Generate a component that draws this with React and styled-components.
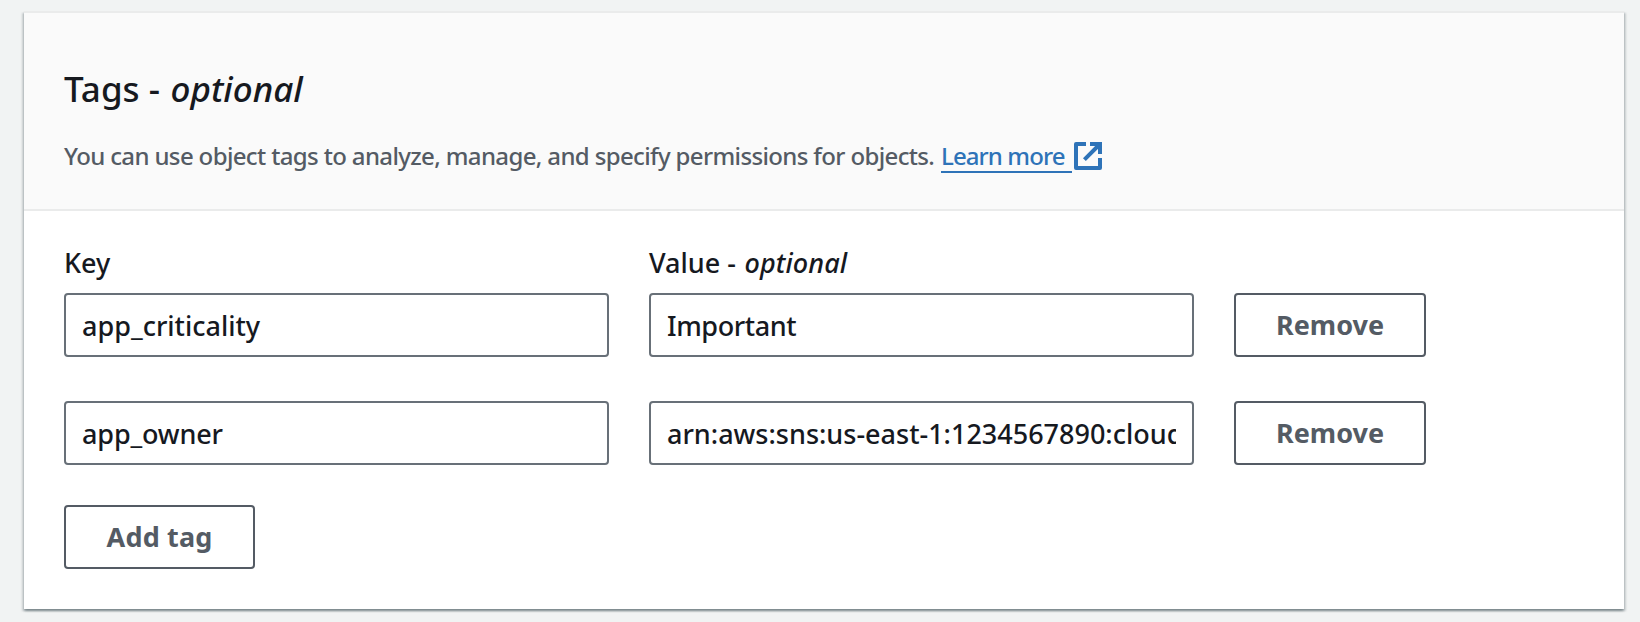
import React from 'react';
import styled, { createGlobalStyle } from 'styled-components';

const GlobalStyle = createGlobalStyle`
  * { box-sizing: border-box; }
  body {
    margin: 0;
    background: #f1f3f3;
    color: #16191f;
    font-family: "Noto Sans", "Open Sans", sans-serif;
    font-weight: 500;
  }
`;

const Page = styled.main`
  height: 622px;
  padding: 11px 16px 13px 24px;
  overflow: hidden;
`;

const Card = styled.section`
  width: 1600px;
  height: 598px;
  background: #fff;
  border-top: 2px solid #eaebeb;
  box-shadow:
    0 2px 2px rgba(0, 28, 36, 0.3),
    2px 2px 2px rgba(0, 28, 36, 0.15),
    -2px 2px 2px rgba(0, 28, 36, 0.15);
`;

const Header = styled.header`
  height: 198px;
  padding: 54px 40px 0;
  background: #fafafa;
  border-bottom: 2px solid #eaebeb;
`;

const Title = styled.h2`
  margin: 0;
  font-size: 35px;
  font-weight: 500;
  line-height: 44px;
  white-space: pre;
`;

const Optional = styled.em`
  margin-left: 1.5px;
  letter-spacing: ${(p) => p.$spacing || 'normal'};
`;

const Description = styled.div`
  display: flex;
  align-items: baseline;
  margin-top: 25px;
  color: #545b64;
  font-size: 24px;
  line-height: 40px;
  white-space: nowrap;
`;

const DescriptionText = styled.span`
  width: 877px;
  letter-spacing: -0.64px;
`;

const Link = styled.a`
  width: 131px;
  margin-right: 2px;
  border-bottom: 2px solid #2e73b8;
  color: #2e73b8;
  line-height: 31px;
  letter-spacing: -0.9px;
`;

const ExternalIcon = styled.svg`
  align-self: flex-start;
  width: 28px;
  height: 28px;
  margin-top: 6px;
  fill: none;
  stroke: #2e73b8;
  stroke-width: 4;
`;

const Body = styled.div`
  padding: 32px 40px 0;
`;

const Row = styled.div`
  display: grid;
  grid-template-columns: 545px 545px 192px;
  column-gap: 40px;
  margin-bottom: ${(p) => p.$gap || 0}px;
`;

const Label = styled.span`
  font-size: 27px;
  line-height: 40px;
  white-space: pre;
`;

const Input = styled.input`
  width: 100%;
  height: 64px;
  padding: 0 16px;
  border: 2px solid #687078;
  border-radius: 4px;
  outline: 0;
  background: #fff;
  color: #16191f;
  font: 500 27px/60px "Noto Sans", "Open Sans", sans-serif;
  letter-spacing: ${(p) => p.$spacing || 'normal'};
`;

const Button = styled.button`
  width: ${(p) => p.$width}px;
  height: 64px;
  padding: 0;
  border: 2px solid #545b64;
  border-radius: 4px;
  background: #fff;
  color: #545b64;
  font: 700 27px/60px "Noto Sans", "Open Sans", sans-serif;
  letter-spacing: ${(p) => p.$spacing || 'normal'};
`;

const tags = [
  { key: 'app_criticality', value: 'Important', valueSpacing: '-0.4px', gap: 44 },
  { key: 'app_owner', value: 'arn:aws:sns:us-east-1:1234567890:cloud', keySpacing: '-0.15px', gap: 40 },
];

export default function App() {
  return (
    <>
      <GlobalStyle />
      <Page>
        <Card>
          <Header>
            <Title>Tags - <Optional>optional</Optional></Title>
            <Description>
              <DescriptionText>
                You can use object tags to analyze, manage, and specify permissions for objects.
              </DescriptionText>
              <Link>Learn more</Link>
              <ExternalIcon viewBox="0 0 28 28" aria-hidden="true">
                <path d="M12 2H2V26H26V16" strokeLinejoin="round" />
                <path d="M16 2H26V12M26 2L10.4 17.6" />
              </ExternalIcon>
            </Description>
          </Header>
          <Body>
            <Row $gap={10}>
              <Label>Key</Label>
              <Label>Value - <Optional $spacing="0.1px">optional</Optional></Label>
            </Row>
            {tags.map((tag) => (
              <Row key={tag.key} $gap={tag.gap}>
                <Input defaultValue={tag.key} $spacing={tag.keySpacing} spellCheck={false} />
                <Input defaultValue={tag.value} $spacing={tag.valueSpacing} spellCheck={false} />
                <Button $width={192}>Remove</Button>
              </Row>
            ))}
            <Button $width={191} $spacing="0.15px">Add tag</Button>
          </Body>
        </Card>
      </Page>
    </>
  );
}
